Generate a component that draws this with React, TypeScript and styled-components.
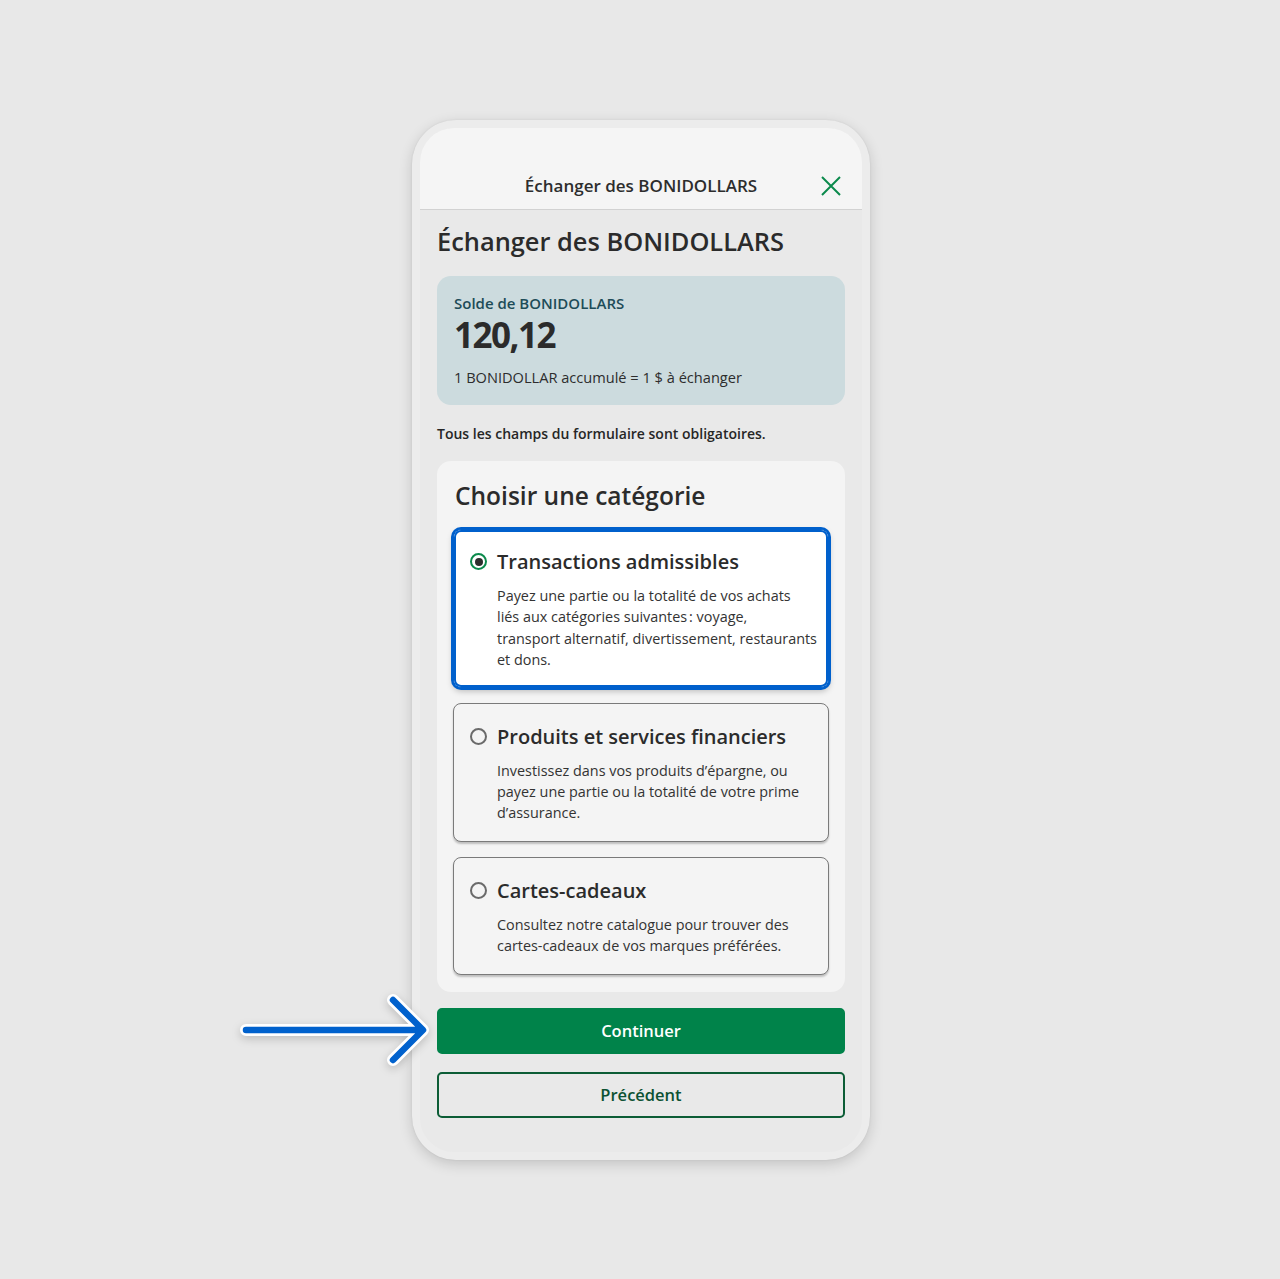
import React from "react";
import styled, { createGlobalStyle } from "styled-components";

const Global = createGlobalStyle`
  html, body { margin: 0; padding: 0; background: #e8e8e8; }
  body { font-family: "Open Sans", "Noto Sans", sans-serif; color: #2d2d2d; -webkit-font-smoothing: antialiased; }
  * { box-sizing: border-box; }
`;

const Page = styled.div`
  min-height: 1279px;
  display: flex;
  justify-content: center;
  padding-top: 120px;
`;

const PhoneWrap = styled.div`
  position: relative;
  width: 458px;
  height: 1040px;
  margin-left: 2px;
`;

const Frame = styled.div`
  width: 100%;
  height: 100%;
  padding: 8px;
  background: #ececec;
  border-radius: 44px;
  box-shadow: 0 4px 14px rgba(0, 0, 0, 0.16), 0 0 2px rgba(0, 0, 0, 0.08);
`;

const Screen = styled.div`
  height: 100%;
  background: #e9e9e9;
  border-radius: 34px;
  overflow: hidden;
  display: flex;
  flex-direction: column;
`;

const Header = styled.header`
  height: 82px;
  background: #f5f5f5;
  border-bottom: 1px solid #d2d2d2;
  display: flex;
  align-items: flex-end;
  justify-content: center;
  position: relative;
  padding-bottom: 10px;
`;

const HeaderTitle = styled.div`
  font-size: 17px;
  font-weight: 600;
  line-height: 26px;
  color: #2d2d2d;
`;

const CloseBtn = styled.button`
  position: absolute;
  right: 19px;
  bottom: 11px;
  width: 24px;
  height: 24px;
  padding: 0;
  border: 0;
  background: none;
  display: flex;
  align-items: center;
  justify-content: center;
`;

const Content = styled.main`
  padding: 14px 17px 0 17px;
  display: flex;
  flex-direction: column;
`;

const H1 = styled.h1`
  margin: 0;
  font-size: 25.4px;
  line-height: 34px;
  font-weight: 600;
  color: #2b2b2b;
`;

const BalanceCard = styled.section`
  margin-top: 18px;
  background: #ccdbde;
  border-radius: 14px;
  padding: 17px 17px 18px 17px;
  display: flex;
  flex-direction: column;
`;

const BalanceLabel = styled.div`
  font-size: 15px;
  line-height: 20px;
  font-weight: 600;
  color: #1d4c58;
`;

const BalanceValue = styled.div`
  margin-top: 2px;
  font-size: 35px;
  line-height: 40px;
  font-weight: 700;
  letter-spacing: -1.5px;
  color: #2b2b2b;
`;

const BalanceNote = styled.div`
  margin-top: 12px;
  font-size: 14.6px;
  line-height: 20px;
  color: #2d2d2d;
`;

const Notice = styled.p`
  margin: 19px 0 0 0;
  font-size: 14px;
  line-height: 20px;
  font-weight: 600;
  color: #262626;
`;

const CategoryCard = styled.section`
  margin-top: 17px;
  background: #f4f4f4;
  border-radius: 14px;
  padding: 19px 16px 17px 16px;
  display: flex;
  flex-direction: column;
`;

const CategoryTitle = styled.h2`
  margin: 0 0 17px 2px;
  font-size: 24.5px;
  line-height: 32px;
  font-weight: 600;
  color: #2b2b2b;
`;

const OptionList = styled.div`
  display: flex;
  flex-direction: column;
  gap: 15px;
`;

const Option = styled.label<{ $selected?: boolean }>`
  display: grid;
  grid-template-columns: 18px 1fr;
  column-gap: 9px;
  padding: ${(p) => (p.$selected ? "18px 4px 16px 16px" : "19px 4px 17px 16px")};
  border-radius: 8px;
  border: 1px solid ${(p) => (p.$selected ? "#0060cc" : "#7a7a7a")};
  background: ${(p) => (p.$selected ? "#ffffff" : "#f4f4f4")};
  box-shadow: ${(p) =>
    p.$selected
      ? "0 0 0 2px #0060cc, inset 0 0 0 2px #0060cc, 0 3px 6px rgba(0,0,0,0.25)"
      : "0 2px 2px rgba(0,0,0,0.22)"};
  cursor: pointer;
`;

const Radio = styled.span<{ $checked?: boolean }>`
  margin-top: 5px;
  width: 17px;
  height: 17px;
  border-radius: 50%;
  border: 2px solid ${(p) => (p.$checked ? "#0b8a4c" : "#6a6a6a")};
  display: flex;
  align-items: center;
  justify-content: center;
  &::after {
    content: "";
    width: 8px;
    height: 8px;
    border-radius: 50%;
    background: #2d2d2d;
    display: ${(p) => (p.$checked ? "block" : "none")};
  }
`;

const OptionTitle = styled.div`
  font-size: 20px;
  line-height: 28px;
  font-weight: 600;
  color: #2b2b2b;
`;

const OptionDesc = styled.div`
  grid-column: 2;
  margin-top: 9px;
  font-size: 14.4px;
  line-height: 21.4px;
  white-space: nowrap;
  color: #333333;
`;

const Button = styled.button<{ $variant: "primary" | "secondary" }>`
  height: 46px;
  width: 100%;
  border-radius: 5px;
  font-family: inherit;
  font-size: 16.5px;
  font-weight: 600;
  cursor: pointer;
  border: 2px solid ${(p) => (p.$variant === "primary" ? "#00834a" : "#0c5d36")};
  background: ${(p) => (p.$variant === "primary" ? "#00834a" : "transparent")};
  color: ${(p) => (p.$variant === "primary" ? "#ffffff" : "#0c5233")};
`;

const Actions = styled.div`
  margin-top: 16px;
  display: flex;
  flex-direction: column;
  gap: 18px;
`;

const Arrow = styled.svg`
  position: absolute;
  left: -172px;
  top: 874px;
  overflow: visible;
  filter: drop-shadow(0 3px 4px rgba(0, 0, 0, 0.18));
`;

type Opt = { title: string; lines: string[]; selected: boolean };

const options: Opt[] = [
  {
    title: "Transactions admissibles",
    lines: [
      "Payez une partie ou la totalité de vos achats",
      "liés aux catégories suivantes\u202f: voyage,",
      "transport alternatif, divertissement, restaurants",
      "et dons.",
    ],
    selected: true,
  },
  {
    title: "Produits et services financiers",
    lines: [
      "Investissez dans vos produits d’épargne, ou",
      "payez une partie ou la totalité de votre prime",
      "d’assurance.",
    ],
    selected: false,
  },
  {
    title: "Cartes-cadeaux",
    lines: [
      "Consultez notre catalogue pour trouver des",
      "cartes-cadeaux de vos marques préférées.",
    ],
    selected: false,
  },
];

export default function App() {
  return (
    <>
      <Global />
      <Page>
        <PhoneWrap>
          <Frame>
            <Screen>
              <Header>
                <HeaderTitle>Échanger des BONIDOLLARS</HeaderTitle>
                <CloseBtn aria-label="Fermer">
                  <svg width="22" height="22" viewBox="0 0 22 22">
                    <path d="M2 2 L20 20 M20 2 L2 20" stroke="#0b8a4c" strokeWidth="2" fill="none" />
                  </svg>
                </CloseBtn>
              </Header>
              <Content>
                <H1>Échanger des BONIDOLLARS</H1>
                <BalanceCard>
                  <BalanceLabel>Solde de BONIDOLLARS</BalanceLabel>
                  <BalanceValue>120,12</BalanceValue>
                  <BalanceNote>1 BONIDOLLAR accumulé = 1 $ à échanger</BalanceNote>
                </BalanceCard>
                <Notice>Tous les champs du formulaire sont obligatoires.</Notice>
                <CategoryCard>
                  <CategoryTitle>Choisir une catégorie</CategoryTitle>
                  <OptionList>
                    {options.map((o) => (
                      <Option key={o.title} $selected={o.selected}>
                        <Radio $checked={o.selected} />
                        <OptionTitle>{o.title}</OptionTitle>
                        <OptionDesc>
                          {o.lines.map((l, i) => (
                            <React.Fragment key={i}>
                              {i > 0 && <br />}
                              {l}
                            </React.Fragment>
                          ))}
                        </OptionDesc>
                      </Option>
                    ))}
                  </OptionList>
                </CategoryCard>
                <Actions>
                  <Button $variant="primary">Continuer</Button>
                  <Button $variant="secondary">Précédent</Button>
                </Actions>
              </Content>
            </Screen>
          </Frame>
          <Arrow width="200" height="80" viewBox="0 0 200 80">
            <g fill="none" strokeLinecap="round" strokeLinejoin="round">
              <path d="M6 36 H182 M153 6 L183 36 L153 66" stroke="#ffffff" strokeWidth="12" />
              <path d="M6 36 H182 M153 6 L183 36 L153 66" stroke="#0061cd" strokeWidth="6.5" />
            </g>
          </Arrow>
        </PhoneWrap>
      </Page>
    </>
  );
}
